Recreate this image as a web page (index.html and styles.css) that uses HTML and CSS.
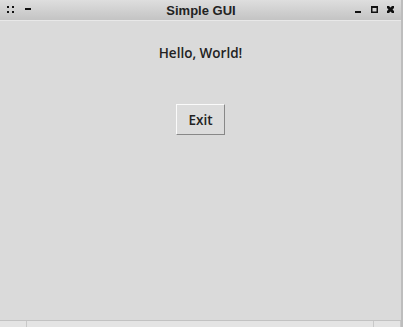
FILE: index.html
```html
<!DOCTYPE html>
<html>
<head>
  <meta charset="utf-8">
  <title>Simple GUI</title>
  <link rel="stylesheet" href="styles.css">
</head>
<body>
  <div class="window">
    <div class="titlebar">
      <div class="tb-left">
        <svg class="tb-icon" width="10" height="8" viewBox="0 0 10 8">
          <rect x="0" y="0" width="2" height="2"/>
          <rect x="5" y="0" width="2" height="2"/>
          <rect x="0" y="5" width="2" height="2"/>
          <rect x="5" y="5" width="2" height="2"/>
        </svg>
        <svg class="tb-icon" width="8" height="8" viewBox="0 0 8 8">
          <rect x="0" y="2" width="6" height="2"/>
        </svg>
      </div>
      <div class="title">Simple GUI</div>
      <div class="tb-right">
        <svg class="tb-icon" width="8" height="8" viewBox="0 0 8 8">
          <rect x="0" y="5" width="6" height="2"/>
        </svg>
        <svg class="tb-icon" width="8" height="8" viewBox="0 0 8 8">
          <path d="M0 0h7v7h-7z M1.5 2v3.5h4v-3.5z" fill-rule="evenodd"/>
        </svg>
        <svg class="tb-icon" width="8" height="8" viewBox="0 0 8 8">
          <path d="M0 0h2l1.5 1.5l1.5-1.5h2v2l-1.5 1.5l1.5 1.5v2h-2l-1.5-1.5l-1.5 1.5h-2v-2l1.5-1.5l-1.5-1.5z"/>
        </svg>
      </div>
    </div>

    <div class="content">
      <p class="greeting">Hello, World!</p>
      <button class="button">Exit</button>
    </div>

    <div class="bottombar">
      <div class="grip"></div>
      <div class="grip-mid"></div>
      <div class="grip"></div>
    </div>
  </div>
</body>
</html>
```

FILE: styles.css
```css
/* Window frame */
body {
  margin: 0;
  padding: 0;
  background-color: #dadada;
}

.window {
  width: 403px;
  height: 327px;
  display: flex;
  flex-direction: column;
  background-color: #dadada;
  border-right: 2px solid #bdbdbd;
  box-sizing: border-box;
}

.titlebar {
  height: 20px;
  display: flex;
  align-items: center;
  justify-content: space-between;
  padding: 0 6px 0 7px;
  background: linear-gradient(#dedede, #c4c4c4);
  border-bottom: 1px solid #e8e8e8;
}

.tb-left,
.tb-right {
  display: flex;
  align-items: center;
  gap: 8px;
  width: 42px;
}

.tb-right {
  justify-content: flex-end;
}

.tb-icon {
  fill: #111;
}

.title {
  font-family: "Liberation Sans", Arial, sans-serif;
  font-weight: bold;
  font-size: 13px;
  color: #222;
}

/* Content */
.content {
  flex: 1;
  display: flex;
  flex-direction: column;
  align-items: center;
}

.greeting {
  margin: 23px 0 0 0;
  font-family: "Open Sans", sans-serif;
  font-weight: 600;
  font-size: 13.5px;
  color: #222;
}

.button {
  margin-top: 42px;
  width: 49px;
  height: 31px;
  padding: 0;
  font-family: "Open Sans", sans-serif;
  font-weight: 600;
  font-size: 13.5px;
  color: #222;
  background-color: #dcdcdc;
  border: 1px solid;
  border-color: #fafafa #888 #888 #fafafa;
}

/* Bottom resize strip */
.bottombar {
  height: 6px;
  display: flex;
  border-top: 1px solid #c2c2c2;
  background-color: #e4e4e4;
}

.grip {
  width: 26px;
  border-right: 1px solid #c8c8c8;
}

.grip-mid {
  flex: 1;
  border-right: 1px solid #c8c8c8;
}
```
